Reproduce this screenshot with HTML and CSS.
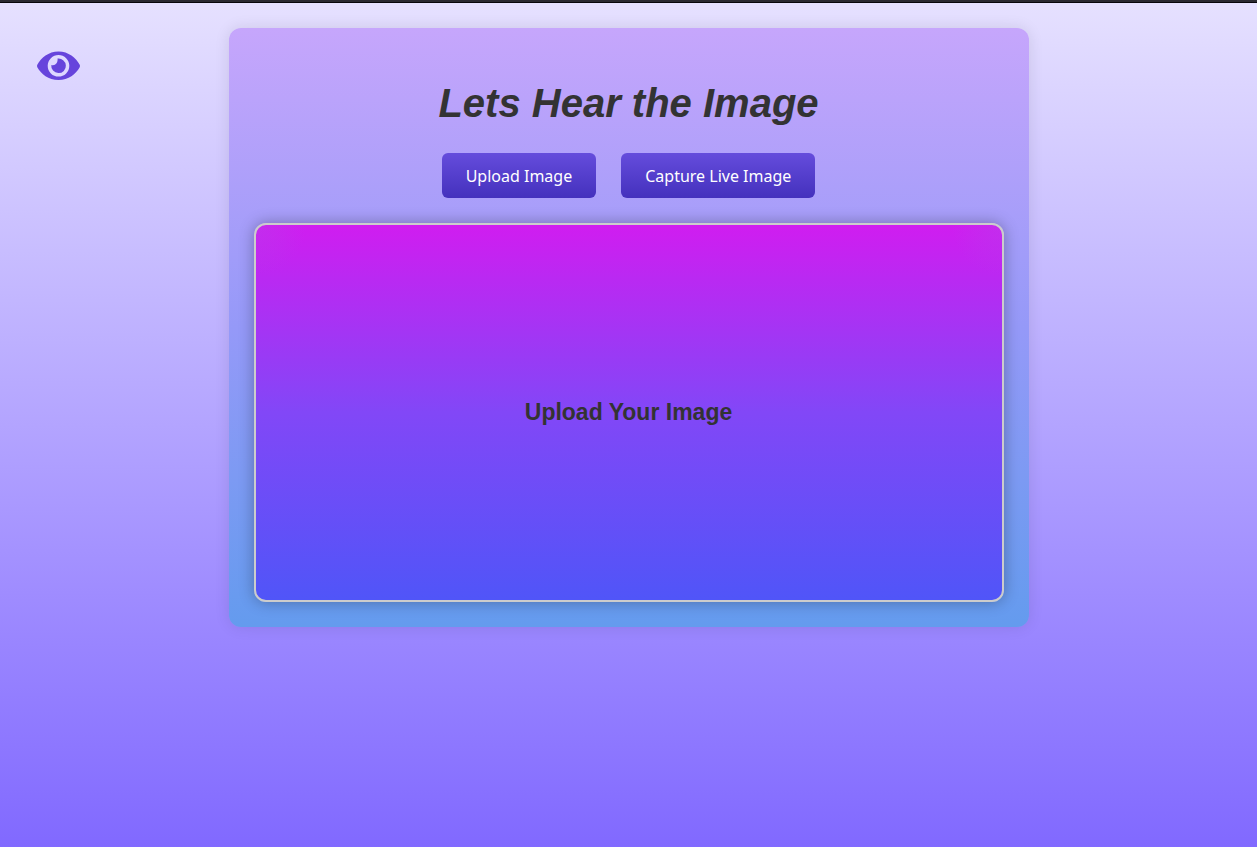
FILE: index.html
```html
<!DOCTYPE html>
<html lang="en">
<head>
<meta charset="utf-8">
<meta name="viewport" content="width=device-width, initial-scale=1">
<title>Lets Hear the Image</title>
<link rel="stylesheet" href="styles.css">
</head>
<body>
<header class="logo">
<svg class="logo-icon" viewBox="0 0 44 30" role="img" aria-label="Eye">
<path fill="#6644dc" fill-rule="evenodd" d="M1.300 13.800C5 7 12.500 0.500 22.500 0.500S40 7 43.700 13.800Q44.200 15 43.700 16.200C40 23 32.500 29 22.500 29S5 23 1.300 16.200Q.8 15 1.300 13.800ZM22.500 4a10.800 10.800 0 1 0 0 21.600a10.800 10.800 0 1 0 0-21.600Z"/>
<path fill="#6644dc" d="M21.500 7.600a7.300 7.300 0 1 1-6.200 6.400c3.500 1.400 7-2 6.200-6.400Z"/>
</svg>
</header>
<main class="card">
<h1 class="title">Lets Hear the Image</h1>
<div class="actions">
<button class="button" type="button">Upload Image</button>
<button class="button" type="button">Capture Live Image</button>
</div>
<section class="preview">
<h2 class="preview-text">Upload Your Image</h2>
</section>
</main>
</body>
</html>
```
FILE: styles.css
```css
* {
  box-sizing: border-box;
}

body {
  margin: 0;
  min-height: 100vh;
  padding: 28px 16px 25px;
  background:
    linear-gradient(#2b2931 2px, #08070c 2px) top / 100% 3px no-repeat,
    linear-gradient(#e6e1ff, #9f8cff 70%, #8169ff);
  color: #333;
  font-family: "Liberation Sans", Arial, sans-serif;
}

.logo {
  position: absolute;
  top: 51px;
  left: 36px;
}

.logo-icon {
  display: block;
  width: 44px;
  height: 30px;
}

.card {
  max-width: 800px;
  margin: 0 auto;
  padding: 52px 25px 25px;
  border-radius: 12px;
  background: linear-gradient(#c6a6fc, #9599f8 50%, #649bee);
  box-shadow: 0 0 15px rgba(0, 0, 0, 0.1);
}

.title {
  margin: 0 0 27px;
  font-size: 40px;
  font-style: italic;
  line-height: 46px;
  text-align: center;
}

.actions {
  display: flex;
  flex-wrap: wrap;
  justify-content: center;
  gap: 25px;
  margin-bottom: 25px;
}

.button {
  padding: 13px 24px 11px;
  border: 0;
  border-radius: 6px;
  background: linear-gradient(#654cdc, #4431bd);
  color: #fff;
  font: 16px/21px "Noto Sans", Tahoma, sans-serif;
  cursor: pointer;
}

.preview {
  display: flex;
  align-items: center;
  justify-content: center;
  aspect-ratio: 750 / 379;
  border: 2px solid #ccc;
  border-radius: 12px;
  background:
    radial-gradient(circle at top left, rgba(170, 80, 230, 0.3), transparent 50px),
    radial-gradient(circle at top right, rgba(170, 80, 230, 0.3), transparent 50px),
    linear-gradient(#d01df0, #8247f7 50%, #5055f8);
  box-shadow: 0 0 15px rgba(0, 0, 0, 0.3);
}

.preview-text {
  margin: 0;
  padding-bottom: 2px;
  font-size: 23px;
  line-height: 26px;
}
```
